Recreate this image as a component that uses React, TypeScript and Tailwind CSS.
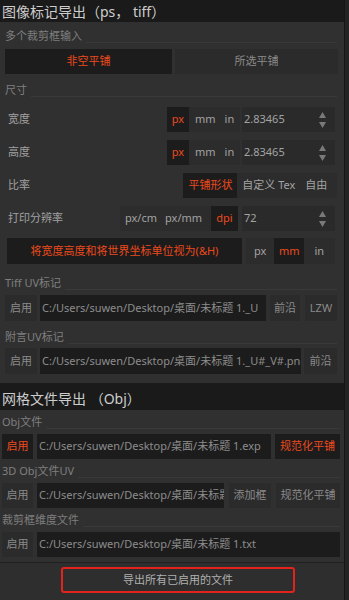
import React from "react";

const RED = "text-[#ec4a1c]";

function Label({ text, mt }: { text: string; mt: string }) {
  return (
    <div className={`flex h-[14px] items-end ${mt}`}>
      <span className="leading-[14px] text-[11px] text-[#7f7f7f] whitespace-nowrap">{text}</span>
      <div className="flex-1 border-b border-[#393939] ml-[4px]" />
    </div>
  );
}

function Spinner() {
  return (
    <svg width="9" height="18" viewBox="0 0 9 18" className="shrink-0">
      <path d="M4.5 1 L8 7 L1 7 Z" fill="#7a7a7a" />
      <path d="M4.5 17 L8 11 L1 11 Z" fill="#7a7a7a" />
    </svg>
  );
}

function NumInput({ value }: { value: string }) {
  return (
    <div className="ml-[2px] w-[93px] h-full bg-[#2a2a2a] flex items-center pl-[2px] pr-[8px] justify-between">
      <span className="text-[11px] text-[#a3a3a3]">{value}</span>
      <Spinner />
    </div>
  );
}

function SizeRow({ label, mt }: { label: string; mt: string }) {
  return (
    <div className={`flex h-[25px] ${mt}`}>
      <div className="w-[162px] pl-[3px] flex items-center text-[11px] text-[#a0a0a0]">{label}</div>
      <div className={`w-[22px] bg-[#1c1c1c] flex items-center justify-center text-[11px] ${RED}`}>px</div>
      <div className="w-[51px] bg-[#2c2c2c] flex items-center text-[11px] text-[#a3a3a3]">
        <span className="ml-[6px]">mm</span>
        <span className="ml-[9px]">in</span>
      </div>
      <NumInput value="2.83465" />
    </div>
  );
}

function PathBox({ text, w, ml }: { text: string; w: string; ml: string }) {
  return (
    <div className={`${w} ${ml} h-full bg-[#1c1c1c] flex items-center pl-[2px] overflow-hidden whitespace-nowrap text-[11px] text-[#8c8c8c]`}>
      {text}
    </div>
  );
}

function Btn({ text, w, ml, dark, red }: { text: string; w: string; ml?: string; dark?: boolean; red?: boolean }) {
  return (
    <div
      className={`${w} ${ml ?? ""} h-full shrink-0 flex items-center justify-center whitespace-nowrap overflow-hidden text-[11px] ${
        dark ? "bg-[#1c1c1c]" : "bg-[#2b2b2b]"
      } ${red ? RED : "text-[#8a8a8a]"}`}
    >
      {text}
    </div>
  );
}

export default function App() {
  return (
    <div
      className="w-[349px] h-[600px] bg-[#232323] flex overflow-hidden"
      style={{ fontFamily: '"Noto Sans", "Noto Sans CJK SC", sans-serif' }}
    >
      <div className="w-[345px] shrink-0 flex flex-col border-r border-[#161616]">
        {/* Header 1 */}
        <div className="h-[22px] bg-[#1a1a1a] pl-[2px] flex items-center text-[14px] text-[#cdcdcd] whitespace-nowrap">
          图像标记导出（ps， tiff）
        </div>
        {/* Section 1 */}
        <div className="bg-[#303030] pl-[5px] pr-[7px] pb-[9px] flex flex-col">
          <Label text="多个裁剪框输入" mt="mt-[7px]" />
          <div className="flex h-[25px] mt-[6px]">
            <Btn text="非空平铺" w="w-[167px]" dark red />
            <Btn text="所选平铺" w="w-[163px]" ml="ml-[3px]" />
          </div>
          <Label text="尺寸" mt="mt-[9px]" />
          <SizeRow label="宽度" mt="mt-[10px]" />
          <SizeRow label="高度" mt="mt-[8px]" />
          <div className="flex h-[25px] mt-[8px]">
            <div className="w-[179px] pl-[3px] flex items-center text-[11px] text-[#a0a0a0]">比率</div>
            <div className={`w-[54px] bg-[#1c1c1c] flex items-center justify-center text-[11px] ${RED}`}>平铺形状</div>
            <div className="w-[100px] bg-[#2c2c2c] flex items-center text-[11px] text-[#a3a3a3] whitespace-nowrap">
              <span className="ml-[5px]">自定义 Tex</span>
              <span className="ml-[10px]">自由</span>
            </div>
          </div>
          <div className="flex h-[25px] mt-[8px]">
            <div className="w-[115px] pl-[3px] flex items-center text-[11px] text-[#a0a0a0]">打印分辨率</div>
            <div className="w-[91px] bg-[#2c2c2c] flex items-center text-[11px] text-[#a3a3a3] whitespace-nowrap">
              <span className="ml-[5px]">px/cm</span>
              <span className="ml-[8px]">px/mm</span>
            </div>
            <div className={`w-[27px] bg-[#1c1c1c] flex items-center justify-center text-[11px] ${RED}`}>dpi</div>
            <div className="ml-[2px]" />
            <NumInput value="72" />
          </div>
          <div className="flex h-[26px] mt-[7px]">
            <div className={`ml-[2px] w-[235px] bg-[#1c1c1c] flex items-center justify-center text-[11px] whitespace-nowrap ${RED}`}>
              将宽度高度和将世界坐标单位视为(&amp;H)
            </div>
            <div className="ml-[4px] w-[89px] bg-[#2c2c2c] flex items-center text-[11px] text-[#a3a3a3]">
              <span className="ml-[8px]">px</span>
              <span className={`ml-[8px] w-[30px] h-full bg-[#1c1c1c] flex items-center justify-center ${RED}`}>mm</span>
              <span className="ml-[10px]">in</span>
            </div>
          </div>
          <Label text="Tiff UV标记" mt="mt-[12px]" />
          <div className="flex h-[26px] mt-[5px]">
            <Btn text="启用" w="w-[32px]" />
            <PathBox text="C:/Users/suwen/Desktop/桌面/未标题 1._U" w="w-[227px]" ml="ml-[3px]" />
            <Btn text="前沿" w="w-[30px]" ml="ml-[4px]" />
            <Btn text="LZW" w="w-[32px]" ml="ml-[5px]" />
          </div>
          <Label text="附言UV标记" mt="mt-[9px]" />
          <div className="flex h-[26px] mt-[4px]">
            <Btn text="启用" w="w-[32px]" />
            <PathBox text="C:/Users/suwen/Desktop/桌面/未标题 1._U#_V#.png" w="w-[263px]" ml="ml-[3px]" />
            <Btn text="前沿" w="w-[33px]" ml="ml-[3px]" />
          </div>
        </div>
        {/* Header 2 */}
        <div className="h-[27px] bg-[#1a1a1a] pl-[2px] flex items-center pt-[4px] text-[14px] text-[#cdcdcd] whitespace-nowrap">
          网格文件导出 （Obj）
        </div>
        {/* Section 2 */}
        <div className="bg-[#303030] pl-[2px] pr-[4px] pb-[5px] flex flex-col">
          <Label text="Obj文件" mt="mt-[5px]" />
          <div className="flex h-[25px] mt-[5px]">
            <Btn text="启用" w="w-[31px]" dark red />
            <PathBox text="C:/Users/suwen/Desktop/桌面/未标题 1.exp" w="w-[235px]" ml="ml-[4px]" />
            <Btn text="规范化平铺" w="w-[65px]" ml="ml-[4px]" dark red />
          </div>
          <Label text="3D Obj文件UV" mt="mt-[5px]" />
          <div className="flex h-[25px] mt-[5px]">
            <Btn text="启用" w="w-[31px]" />
            <PathBox text="C:/Users/suwen/Desktop/桌面/未标题 1.obj" w="w-[188px]" ml="ml-[4px]" />
            <Btn text="添加框" w="w-[42px]" ml="ml-[5px]" />
            <Btn text="规范化平铺" w="w-[64px]" ml="ml-[5px]" />
          </div>
          <Label text="裁剪框维度文件" mt="mt-[5px]" />
          <div className="flex h-[25px] mt-[5px]">
            <Btn text="启用" w="w-[31px]" />
            <PathBox text="C:/Users/suwen/Desktop/桌面/未标题 1.txt" w="w-[304px]" ml="ml-[4px]" />
          </div>
        </div>
        {/* Bottom */}
        <div className="flex-1 bg-[#2e2e2e] border-t border-[#202020] pt-[4px]">
          <div className="ml-[61px] w-[234px] h-[26px] border-2 border-[#e3231b] rounded-[3px] flex items-center justify-center text-[11px] text-[#b0b0b0]">
            导出所有已启用的文件
          </div>
        </div>
      </div>
    </div>
  );
}
